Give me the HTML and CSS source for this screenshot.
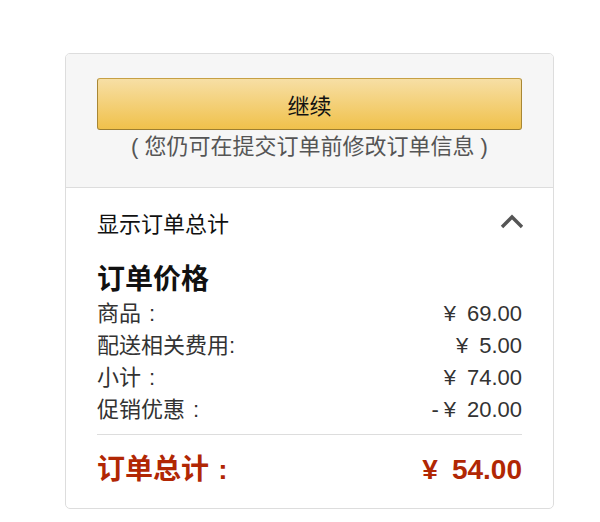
FILE: index.html
```html
<!DOCTYPE html>
<html lang="zh-CN">
<head>
    <meta charset="UTF-8">
    <meta name="viewport" content="width=device-width, initial-scale=1.0">
    <title>订单总计</title>
    <link rel="stylesheet" href="styles.css">
</head>
<body>
    <div class="order-card">
        <div class="checkout-box">
            <button class="continue-button">继续</button>
            <p class="note">( 您仍可在提交订单前修改订单信息 )</p>
        </div>

        <div class="summary">
            <div class="summary-toggle">
                <span>显示订单总计</span>
                <svg class="chevron" width="24" height="16" viewBox="0 0 24 16">
                    <polyline points="2,13 12,3 22,13" fill="none" stroke="#555" stroke-width="3.4"/>
                </svg>
            </div>

            <h2 class="summary-title">订单价格</h2>

            <div class="line-item">
                <span>商品<span class="cell">:</span></span>
                <span><span class="cell">¥</span> 69.00</span>
            </div>
            <div class="line-item">
                <span>配送相关费用:</span>
                <span><span class="cell">¥</span> 5.00</span>
            </div>
            <div class="line-item">
                <span>小计<span class="cell">:</span></span>
                <span><span class="cell">¥</span> 74.00</span>
            </div>
            <div class="line-item">
                <span>促销优惠<span class="cell">:</span></span>
                <span>-<span class="cell">¥</span> 20.00</span>
            </div>

            <div class="total">
                <span>订单总计<span class="cell">:</span></span>
                <span><span class="cell">¥</span> 54.00</span>
            </div>
        </div>
    </div>
</body>
</html>
```

FILE: styles.css
```css
* {
    margin: 0;
    padding: 0;
    box-sizing: border-box;
}

body {
    font-family: "Liberation Sans", Arial, "Noto Sans CJK SC", sans-serif;
    background: #fff;
    color: #333;
    padding: 53px 0 0 65px;
}

.order-card {
    width: 489px;
    border: 1px solid #ddd;
    border-radius: 5px;
    overflow: hidden;
}

.checkout-box {
    background: #f6f6f6;
    border-bottom: 1px solid #ddd;
    padding: 24px 31px 24px;
}

.continue-button {
    display: block;
    width: 100%;
    height: 52px;
    font-family: inherit;
    font-size: 22px;
    color: #111;
    background: linear-gradient(to bottom, #f7dfa5, #f0c14b);
    border: 1px solid #a88734;
    border-color: #c6a045 #a88734 #9c7e31;
    border-radius: 3px;
    cursor: pointer;
}

.note {
    text-align: center;
    font-size: 22px;
    line-height: 32px;
    color: #555;
    margin-top: 1px;
}

.summary {
    padding: 14px 31px 18px;
}

.summary-toggle {
    display: flex;
    justify-content: space-between;
    align-items: center;
    height: 40px;
    font-size: 22px;
    color: #111;
}

.chevron {
    margin-right: -2px;
}

.summary-title {
    font-size: 28px;
    line-height: 36px;
    font-weight: bold;
    color: #111;
    margin-top: 20px;
}

.line-item {
    display: flex;
    justify-content: space-between;
    font-size: 22px;
    line-height: 32px;
    color: #333;
}

/* full-width colon / yen: glyph centred in a 1em cell */
.cell {
    display: inline-block;
    width: 1em;
    text-align: center;
}

.total {
    display: flex;
    justify-content: space-between;
    align-items: center;
    border-top: 1px solid #ddd;
    margin-top: 8px;
    padding-top: 15px;
    font-size: 28px;
    line-height: 40px;
    font-weight: bold;
    color: #b12704;
}
```
